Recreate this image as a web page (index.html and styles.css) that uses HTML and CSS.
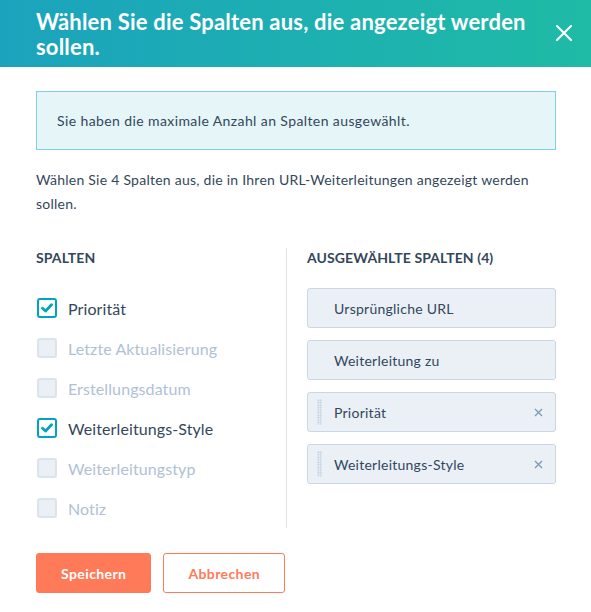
FILE: index.html
```html
<!DOCTYPE html>
<html lang="de">
<head>
<meta charset="utf-8">
<title>Spalten auswählen</title>
<link rel="stylesheet" href="styles.css">
</head>
<body>
<div class="dialog">
  <header class="header">
    <h1 class="title">Wählen Sie die Spalten aus, die angezeigt werden sollen.</h1>
    <button class="close" aria-label="Schließen">
      <svg width="16" height="16" viewBox="0 0 16 16"><path d="M1 1 L15 15 M15 1 L1 15" stroke="#fff" stroke-width="2" fill="none" stroke-linecap="square"/></svg>
    </button>
  </header>
  <main class="body">
    <div class="alert">Sie haben die maximale Anzahl an Spalten ausgewählt.</div>
    <p class="desc">Wählen Sie 4 Spalten aus, die in Ihren URL-Weiterleitungen angezeigt werden sollen.</p>
    <div class="columns">
      <section class="col-left">
        <h2 class="heading">SPALTEN</h2>
        <ul class="checklist">
          <li class="check-row checked"><span class="box"><svg width="12" height="10" viewBox="0 0 12 10"><path d="M1.5 5.2 L4.6 8 L10.5 1.8" stroke="#00a4bd" stroke-width="2.8" fill="none" stroke-linecap="round" stroke-linejoin="round"/></svg></span>Priorität</li>
          <li class="check-row disabled"><span class="box"></span>Letzte Aktualisierung</li>
          <li class="check-row disabled"><span class="box"></span>Erstellungsdatum</li>
          <li class="check-row checked"><span class="box"><svg width="12" height="10" viewBox="0 0 12 10"><path d="M1.5 5.2 L4.6 8 L10.5 1.8" stroke="#00a4bd" stroke-width="2.8" fill="none" stroke-linecap="round" stroke-linejoin="round"/></svg></span>Weiterleitungs-Style</li>
          <li class="check-row disabled"><span class="box"></span>Weiterleitungstyp</li>
          <li class="check-row disabled"><span class="box"></span>Notiz</li>
        </ul>
      </section>
      <section class="col-right">
        <h2 class="heading">AUSGEWÄHLTE SPALTEN (4)</h2>
        <ul class="selected">
          <li class="item"><span class="item-label">Ursprüngliche URL</span></li>
          <li class="item"><span class="item-label">Weiterleitung zu</span></li>
          <li class="item movable"><span class="handle"></span><span class="item-label">Priorität</span><span class="remove"><svg width="9" height="9" viewBox="0 0 9 9"><path d="M1 1 L8 8 M8 1 L1 8" stroke="#7c98b6" stroke-width="1.3" fill="none"/></svg></span></li>
          <li class="item movable"><span class="handle"></span><span class="item-label">Weiterleitungs-Style</span><span class="remove"><svg width="9" height="9" viewBox="0 0 9 9"><path d="M1 1 L8 8 M8 1 L1 8" stroke="#7c98b6" stroke-width="1.3" fill="none"/></svg></span></li>
        </ul>
      </section>
    </div>
    <div class="actions">
      <button class="btn btn-primary">Speichern</button>
      <button class="btn btn-secondary">Abbrechen</button>
    </div>
  </main>
</div>
</body>
</html>
```
FILE: styles.css
```css
* { box-sizing: border-box; }
html, body { margin: 0; padding: 0; background: #fff; }
body {
  font-family: Lato, "Open Sans", "Liberation Sans", sans-serif;
  color: #33475b;
}
.dialog { width: 591px; }
.header {
  height: 67px;
  display: flex;
  align-items: center;
  justify-content: space-between;
  padding: 0 18px 0 36px;
  background: linear-gradient(to right, #1ba3bd 0%, #1fbba6 100%);
}
.title {
  margin: 0;
  max-width: 500px;
  font-size: 22px;
  line-height: 25px;
  font-weight: 700;
  letter-spacing: 0.2px;
  color: #fff;
}
.close {
  border: 0;
  background: transparent;
  padding: 0;
  width: 18px;
  height: 18px;
  display: flex;
  align-items: center;
  justify-content: center;
  margin-top: -2px;
}
.body { padding: 24px 35px 0 36px; }
.alert {
  border: 1px solid #7fd1de;
  background: #e5f5f8;
  padding: 18px 20px 18px 20px;
  font-size: 14px;
  line-height: 21px;
  letter-spacing: 0.4px;
}
.desc {
  margin: 18px 0 0;
  font-size: 14px;
  line-height: 24px;
  letter-spacing: 0.25px;
  padding-right: 20px;
}
.columns {
  display: grid;
  grid-template-columns: 250px 270px;
  margin-top: 32px;
}
.col-right {
  border-left: 1px solid #dfe3eb;
  padding-left: 20px;
}
.heading {
  margin: 0 0 20px;
  font-size: 14px;
  line-height: 20px;
  font-weight: 700;
  letter-spacing: 0.1px;
}
.checklist, .selected { list-style: none; margin: 0; padding: 0; }
.check-row {
  height: 40px;
  display: flex;
  align-items: center;
  font-size: 16px;
  letter-spacing: 0.1px;
  padding-left: 1px;
}
.box {
  width: 20px;
  height: 20px;
  border-radius: 3px;
  margin-right: 11px;
  display: flex;
  align-items: center;
  justify-content: center;
}
.checked .box { border: 2px solid #00a4bd; background: #fff; }
.checked { color: #33475b; }
.disabled { color: #b0c1d4; }
.disabled .box { border: 2px solid #dbe3ec; background: #eaf0f6; }
.selected { display: flex; flex-direction: column; gap: 12px; }
.item {
  position: relative;
  height: 40px;
  border: 1px solid #cbd6e2;
  border-radius: 3px;
  background: #eaf0f6;
  display: flex;
  align-items: center;
  padding: 0 12px 0 26px;
  font-size: 14px;
  letter-spacing: 0.25px;
}
.item-label { flex: 1; }
.handle {
  position: absolute;
  left: 9px;
  top: 6px;
  width: 5px;
  height: 26px;
  background-image: radial-gradient(circle, #cbd6e2 0.9px, transparent 1.1px);
  background-size: 2.5px 2.5px;
}
.remove { display: flex; width: 10px; height: 10px; align-items: center; justify-content: center; }
.actions {
  display: flex;
  gap: 12px;
  margin-top: 25px;
}
.btn {
  height: 40px;
  border-radius: 3px;
  font-family: inherit;
  font-size: 14px;
  font-weight: 700;
  letter-spacing: 0.4px;
  padding: 0 24px;
  cursor: pointer;
}
.btn-primary { background: #ff7a59; border: 1px solid #ff7a59; color: #fff; }
.btn-secondary { background: #fff; border: 1px solid #ff7a59; color: #ff7a59; }
```
